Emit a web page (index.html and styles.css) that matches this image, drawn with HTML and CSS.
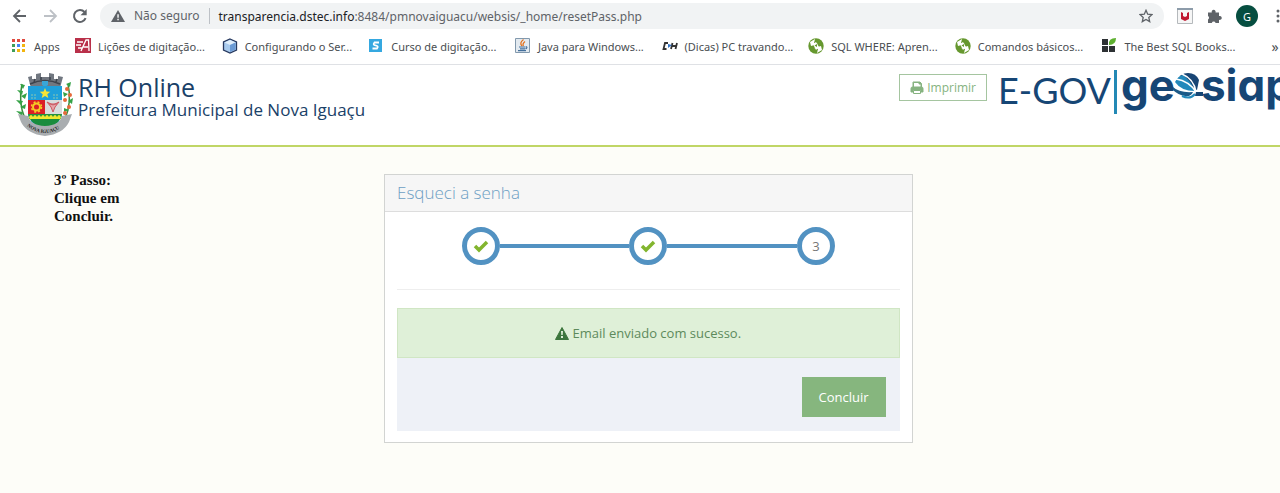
FILE: index.html
```html
<!DOCTYPE html>
<html lang="pt-BR">
<head>
<meta charset="utf-8">
<title>RH Online</title>
<link rel="stylesheet" href="styles.css">
</head>

<body>
	<div class="browser">
		<div class="toolbar">
			<div class="nav">
				<button type="button" aria-label="Voltar"><svg width="16" height="16" viewBox="0 0 16 16"><path d="M14 8H2.500M8 2L2 8l6 6" fill="none" stroke="#5f6368" stroke-width="1.800"/></svg></button>
				<button type="button" aria-label="Avançar"><svg width="16" height="16" viewBox="0 0 16 16"><path d="M2 8h11.500M8 2l6 6-6 6" fill="none" stroke="#bdc1c6" stroke-width="1.800"/></svg></button>
				<button type="button" aria-label="Recarregar"><svg width="16" height="16" viewBox="0 0 16 16"><path d="M13.600 10.200A6 6 0 1 1 12.500 4" fill="none" stroke="#5f6368" stroke-width="2"/><path d="M14.700 1v6.200H8.500z" fill="#5f6368"/></svg></button>
			</div>
			<div class="address">
				<svg width="14" height="12" viewBox="0 0 14 12"><path d="M7 0l7 12H0z" fill="#5f6368"/><path d="M6.300 4.300h1.500v3.500H6.300zM6.300 8.800h1.500v1.500H6.300z" fill="#f1f3f4"/></svg>
				<span class="insecure">Não seguro</span>
				<span class="url"><b>transparencia.dstec.info</b>:8484/pmnovaiguacu/websis/_home/resetPass.php</span>
				<button type="button" aria-label="Favoritar"><svg width="14" height="14" viewBox="0 0 14 14"><path d="M7 1.300l1.700 3.900 4.300.4-3.200 2.800.9 4.200L7 10.400l-3.700 2.200.9-4.200L1 5.600l4.300-.4z" fill="none" stroke="#5f6368" stroke-width="1.300"/></svg></button>
			</div>
			<div class="tools">
				<button type="button" aria-label="McAfee"><svg width="16" height="16" viewBox="0 0 16 16"><path d="M.5.5h15v15H.5z" fill="#f6f6f6" stroke="#b5b9bc"/><path d="M0 0h16v2H0z" fill="#8d9caa"/><path d="M4 4l2 1v3l2 1 2-1V5l2-1v7l-4 2-4-2z" fill="#c01830"/></svg></button>
				<button type="button" aria-label="Extensões"><svg width="15" height="15" viewBox="0 0 15 15"><path d="M1 3.500h3.800a2 2 0 1 1 3.700 0H12v3.600a2 2 0 1 1 0 3.700V14H8.600a2 2 0 0 0-3.800 0H1v-3.600a2 2 0 0 0 0-3.500z" fill="#5f6368"/></svg></button>
				<button type="button" class="avatar">G</button>
				<button type="button" aria-label="Menu"><svg width="4" height="14" viewBox="0 0 4 14"><g fill="#5f6368"><circle cx="2" cy="2" r="1.500"/><circle cx="2" cy="7" r="1.500"/><circle cx="2" cy="12" r="1.500"/></g></svg></button>
			</div>
		</div>
		<div class="bookmarks">
			<a href="#" class="apps"><svg width="14" height="14" viewBox="0 0 14 14"><path d="M0 0h3v3H0zM5 0h3v3H5zM10 0h3v3h-3z" fill="#e04a3f"/><path d="M0 5h3v3H0z" fill="#3f9e58"/><path d="M5 5h3v3H5z" fill="#4285f4"/><path d="M10 5h3v3h-3z" fill="#f2b50f"/><path d="M0 10h3v3H0z" fill="#3f9e58"/><path d="M5 10h3v3H5zM10 10h3v3h-3z" fill="#f2b50f"/></svg>Apps</a>
			<ul>
				<li><a href="#"><svg width="16" height="16" viewBox="0 0 16 16"><path d="M0 0h16v15H0z" fill="#b9304a"/><path d="M6 13L11 2h2.500l.5 11M8.500 9H13M2 4h6M1 7h5M3 10h4" fill="none" stroke="#fff" stroke-width="1.300"/></svg>Lições de digitação...</a></li>
				<li><a href="#"><svg width="16" height="16" viewBox="0 0 16 16"><path d="M8 1l6.500 3v8L8 15l-6.500-3V4z" fill="#a9cbee" stroke="#27395f" stroke-width="1.300"/><path d="M8 2l5.500 2.500L8 7 2.500 4.500z" fill="#e1effb"/><path d="M8 7l5.500-2.500v7L8 14z" fill="#6b9bd5"/></svg>Configurando o Ser...</a></li>
				<li><a href="#"><svg width="16" height="16" viewBox="0 0 16 16"><path d="M1 1h13v13H1z" fill="#35a8e0"/><path d="M11 4.500H6.500Q4.500 7 7.500 7.300 11 8 9 10.500H4.500" fill="none" stroke="#fff" stroke-width="1.800"/></svg>Curso de digitação...</a></li>
				<li><a href="#"><svg width="16" height="16" viewBox="0 0 16 16"><path d="M.5.5h14v14H.5z" fill="#e3eaf0" stroke="#8299ad"/><path d="M8.500 1.500Q4 5 7 8M10 3.500Q7 6 8.500 8" fill="none" stroke="#e2711d" stroke-width="1.300"/><path d="M4 9h6.500M5 10.800h5M3 12.700h8M11 8.500q2 1-.5 2.500" fill="none" stroke="#436f9c" stroke-width="1.200"/></svg>Java para Windows...</a></li>
				<li><a href="#"><svg width="16" height="16" viewBox="0 0 16 16"><path d="M6 5H3L1.500 11h3M10.500 5L9 11M15 5l-1.500 6M9.500 8H14" fill="none" stroke="#333" stroke-width="1.800"/><path d="M6 6l4 1-4 3z" fill="#3374c4"/></svg>(Dicas) PC travando...</a></li>
				<li><a href="#"><svg width="16" height="16" viewBox="0 0 16 16"><circle cx="8" cy="8" r="7.700" fill="#66982f"/><path d="M3 8L2 4l5-3-1 4 4 1M13 8l1 4-5 3 1-4-4-1" fill="#fff"/><path d="M5 6l3-2 3 5-3 3z" fill="#fff"/><path d="M6.500 7.500L9 6v3z" fill="#66982f"/></svg>SQL WHERE: Apren...</a></li>
				<li><a href="#"><svg width="16" height="16" viewBox="0 0 16 16"><circle cx="8" cy="8" r="7.700" fill="#66982f"/><path d="M3 8L2 4l5-3-1 4 4 1M13 8l1 4-5 3 1-4-4-1" fill="#fff"/><path d="M5 6l3-2 3 5-3 3z" fill="#fff"/><path d="M6.500 7.500L9 6v3z" fill="#66982f"/></svg>Comandos básicos...</a></li>
				<li><a href="#"><svg width="16" height="16" viewBox="0 0 16 16"><path d="M1 1h6v6H1zM1 8h6v6H1zM8 8h6v6H8z" fill="#2d3134"/><path d="M8 7Q7 0 15 0q0 7-7 7z" fill="#5eb030"/></svg>The Best SQL Books...</a></li>
			</ul>
			<button type="button" class="more">»</button>
		</div>
	</div>

	<header class="header">
		<svg class="arms" width="58" height="64" viewBox="0 0 58 64">
			<!-- crown -->
			<path d="M12 5l4-1v3h4V2l5-1v4h8V1l5 1v5h4V4l5 1-3 11H15z" fill="#717780"/>
			<path d="M14 12q15-7 30 0M18 10l1-3M25 8V5M34 8V5M40 10l1-3" fill="none" stroke="#3d434c" stroke-width="1.500"/>
			<path d="M26 9h6v4l-3 2-3-2z" fill="#38a6d8"/>
			<!-- branches -->
			<path d="M6 12q-4 18 3 35M52 12q4 18-3 35" fill="none" stroke="#3c8c3c" stroke-width="1.500"/>
			<g fill="#35a246"><path d="M4 12l5 1-2 4zM1 18l6 1-1 4zM5 24l6-3-2 6zM0 28l7 1-2 4zM4 35l6-3-1 5zM0 39l7 1-1 4zM50 12l5-2-1 5zM47 20l5 2-4 3zM52 29l5-3-1 6zM48 36l5 2-5 2z"/></g>
			<g fill="#e66a3a"><circle cx="51" cy="17" r="2"/><circle cx="54" cy="23" r="2"/><circle cx="49" cy="28" r="2"/><circle cx="53" cy="35" r="2"/><circle cx="49" cy="41" r="2"/></g>
			<!-- shield -->
			<path d="M12 14h34v28q-2 12-17 14Q14 54 12 42z" fill="#1e9fda"/>
			<path d="M29 16l1.400 3.600 3.900.2-3 2.400 1 3.800-3.300-2.100-3.300 2.100 1-3.800-3-2.400 3.900-.2z" fill="#f7e535"/>
			<path d="M15 23h6M15 26h6M37 23h6M37 26h6" stroke="#8bc7b0" stroke-dasharray="2 1"/>
			<path d="M12 28h17v14H12z" fill="#db1e26"/><path d="M29 28h17v14H29z" fill="#d9dcdc"/>
			<circle cx="20.500" cy="35" r="3.500" fill="none" stroke="#f5cb26" stroke-width="2"/>
			<circle cx="20.500" cy="35" r="5" fill="none" stroke="#f5cb26" stroke-width="1.500" stroke-dasharray="2 2"/>
			<path d="M31 30l6 3 6-3-4 5-2 5-2-5zM33 32h8" fill="#e5a5a9" stroke="#cc555f"/>
			<path d="M12 42h34l-1 5H13z" fill="#26933d"/>
			<path d="M13 45q2-4 4 0 2-4 4 0 2-4 4 0 2-4 4 0 2-4 4 0 2-4 4 0 2-4 4 0 2-4 4 0l-1 3H14z" fill="#f0e82f"/>
			<path d="M14 47h30q-3 7-15 9Q18 54 14 47z" fill="#198c3d"/>
			<!-- ribbon -->
			<path d="M2 42l10 2q2 9 17 10 15-1 17-10l10-2-3 8q-6 12-24 14Q11 62 5 50z" fill="#a9adb0"/>
			<path id="ribbon" d="M11 54q8 7 18 7t19-8" fill="none"/>
			<text class="motto"><textPath href="#ribbon">NOVA IGUAÇU</textPath></text>
		</svg>
		<div class="brand">
			<h1>RH Online</h1>
			<h2>Prefeitura Municipal de Nova Iguaçu</h2>
		</div>
		<button type="button" class="print"><svg width="14" height="14" viewBox="0 0 14 14"><path d="M3 6V1h7l1.500 1.500V6M1 11V7.500Q1 6 2.500 6h9Q13 6 13 7.500V11h-2V9H3v2z" fill="#86b380" stroke="#86b380"/><path d="M3.500 1.500h5.500V3h2v3h-7.500zM3.500 9.500h7v3h-7z" fill="#fff" stroke="#86b380"/></svg>Imprimir</button>
		<div class="logo">
			<span class="egov">E-GOV</span>
			<span class="geosiap">ge<svg width="30" height="30" viewBox="0 0 30 30">
				<path d="M3 12Q7 3 15 3q8 0 11 7l-2 10z" fill="#184574"/>
				<path d="M2 12Q5 6 10 5q8 6 12 16Q8 21 2 12z" fill="#2389bb"/>
				<path d="M9 4q12 5 14 18M3 9q13 2 20 13" fill="none" stroke="#fff" stroke-width="1.500"/>
				<path d="M0 17q6 6 20 5-2 5-8 4Q5 25 0 20z" fill="#1b5a88"/>
				<path d="M9 26q8 4 13-2" fill="none" stroke="#2389bb" stroke-width="2"/>
				<path d="M23 22h7v4h-8z" fill="#164675"/>
			</svg>siap</span>
		</div>
	</header>

	<main class="content">
		<p class="note">3º Passo:<br>Clique em<br>Concluir.</p>
		<section class="panel">
			<h3>Esqueci a senha</h3>
			<div class="panel-body">
				<ol class="steps">
					<li><span class="circle"><svg width="16" height="14" viewBox="0 0 16 14"><path d="M2 7l4 4 8-8" fill="none" stroke="#82b52e" stroke-width="3.500"/></svg></span></li>
					<li><span class="circle"><svg width="16" height="14" viewBox="0 0 16 14"><path d="M2 7l4 4 8-8" fill="none" stroke="#82b52e" stroke-width="3.500"/></svg></span></li>
					<li><span class="circle">3</span></li>
				</ol>
				<hr>
				<div class="alert" role="alert"><svg width="14" height="13" viewBox="0 0 14 13"><path d="M7 .5L13.500 12.500H.5z" fill="#3c763d" stroke="#3c763d" stroke-linejoin="round"/><path d="M6 4h2l-.3 4H6.300zM6 9h2v2H6z" fill="#dff0d8"/></svg>Email enviado com sucesso.</div>
				<div class="actions"><button type="button">Concluir</button></div>
			</div>
		</section>
	</main>
</body>
</html>
```
FILE: styles.css
```css
*{margin:0; padding:0; box-sizing:border-box;}
body{min-height:100vh; background:#fdfdf8; font-family:"Open Sans",sans-serif; font-size:13px; overflow-x:hidden;}
ul,ol{list-style:none;}
button{border:0; background:none; font-family:inherit; cursor:pointer;}
svg{display:block; flex:none;}

.browser{background:#fff; border-bottom:1px solid #dfe1e5; color:#5f6368; font-family:"Noto Sans",sans-serif;}
.toolbar{display:flex; align-items:center; height:32px;}
.nav{display:flex; gap:14px; padding:0 12px;}
.address{flex:1; display:flex; align-items:center; height:26px; padding:0 11px; border-radius:13px; background:#f1f3f4; font-size:12px; white-space:nowrap;}
.insecure{margin-left:9px; padding-right:9px; border-right:1px solid #bdc1c6; line-height:16px;}
.url{flex:1; margin-left:9px;}
.url b{font-weight:normal; color:#202124;}
.tools{display:flex; align-items:center; gap:14px; padding-left:13px;}
.avatar{width:22px; height:22px; margin-right:4px; border-radius:50%; background:#064e40; color:#fff; font-size:11px;}

.bookmarks{display:flex; align-items:center; height:32px; padding:0 0 4px 12px; font-size:11px; white-space:nowrap;}
.bookmarks a{display:flex; align-items:center; gap:7px; color:#4a4e52; text-decoration:none;}
.bookmarks .apps{width:63px; gap:8px;}
.bookmarks ul{flex:1; display:flex;}
.bookmarks li{flex:1;}
.more{width:32px; padding-left:22px; color:#4a4e52; font-size:14px;}

.header{display:flex; align-items:flex-start; height:82px; padding:7px 0 0 16px; border-bottom:2px solid #c0d666; background:#fff; overflow:hidden;}
.motto{font:bold 5px "Liberation Serif",serif; fill:#222;}
.brand{flex:1; margin:2px 0 0 4px; color:#1a4168; white-space:nowrap;}
.brand h1{font-size:25px; font-weight:normal; line-height:26px;}
.brand h2{font-size:17px; font-weight:normal; line-height:20px;}
.print{display:flex; align-items:center; gap:3px; height:27px; margin:2px 11px 0 0; padding:0 10px; border:1px solid #a5c5a0; color:#86b380; font-size:12px;}
.logo{display:flex; height:44px; margin-top:-2px; color:#164675; white-space:nowrap;}
.egov{padding-right:3px; border-right:3px solid #2389b5; font:36px/40px Lato,sans-serif;}
.geosiap{display:flex; align-items:center; margin:0 -13px 0 4px; padding-bottom:14px; font:bold 44px/30px Inter,sans-serif; font-feature-settings:"cv11";}
.geosiap svg{margin:0 -2px;}

.content{display:grid; grid-template-columns:30% 41.3%; align-items:start; padding-top:27px;}
.note{padding-left:54px; margin-top:-3px; color:#111; font:bold 15px/18px "Liberation Serif",serif;}
.panel{border:1px solid #d2d4d2; background:#fff;}
.panel h3{padding:0 12px; border-bottom:1px solid #ddd; background:#f6f6f6; color:#6d9fc4; font-size:17px; font-weight:300; line-height:36px;}
.panel-body{padding:15px 12px 11px;}
.steps{display:flex;}
.steps li{flex:1; display:flex; align-items:center;}
.steps li:before,.steps li:after{content:''; flex:1; height:4px; background:#5292c2;}
.steps li:first-child:before,.steps li:last-child:after{background:none;}
.circle{display:flex; align-items:center; justify-content:center; width:38px; height:38px; border:5px solid #5292c2; border-radius:50%; color:#777;}
hr{margin:24px 0 18px; border:0; border-top:1px solid #eee;}
.alert{display:flex; align-items:center; justify-content:center; gap:3px; height:50px; border:1px solid #d0e6c4; background:#dff0d8; color:#5d8a5c;}
.actions{padding:19px 14px 14px; background:#eef1f7; text-align:right;}
.actions button{height:40px; padding:0 17px; background:#86b67e; color:#fff; font-size:13px; vertical-align:top;}
```
